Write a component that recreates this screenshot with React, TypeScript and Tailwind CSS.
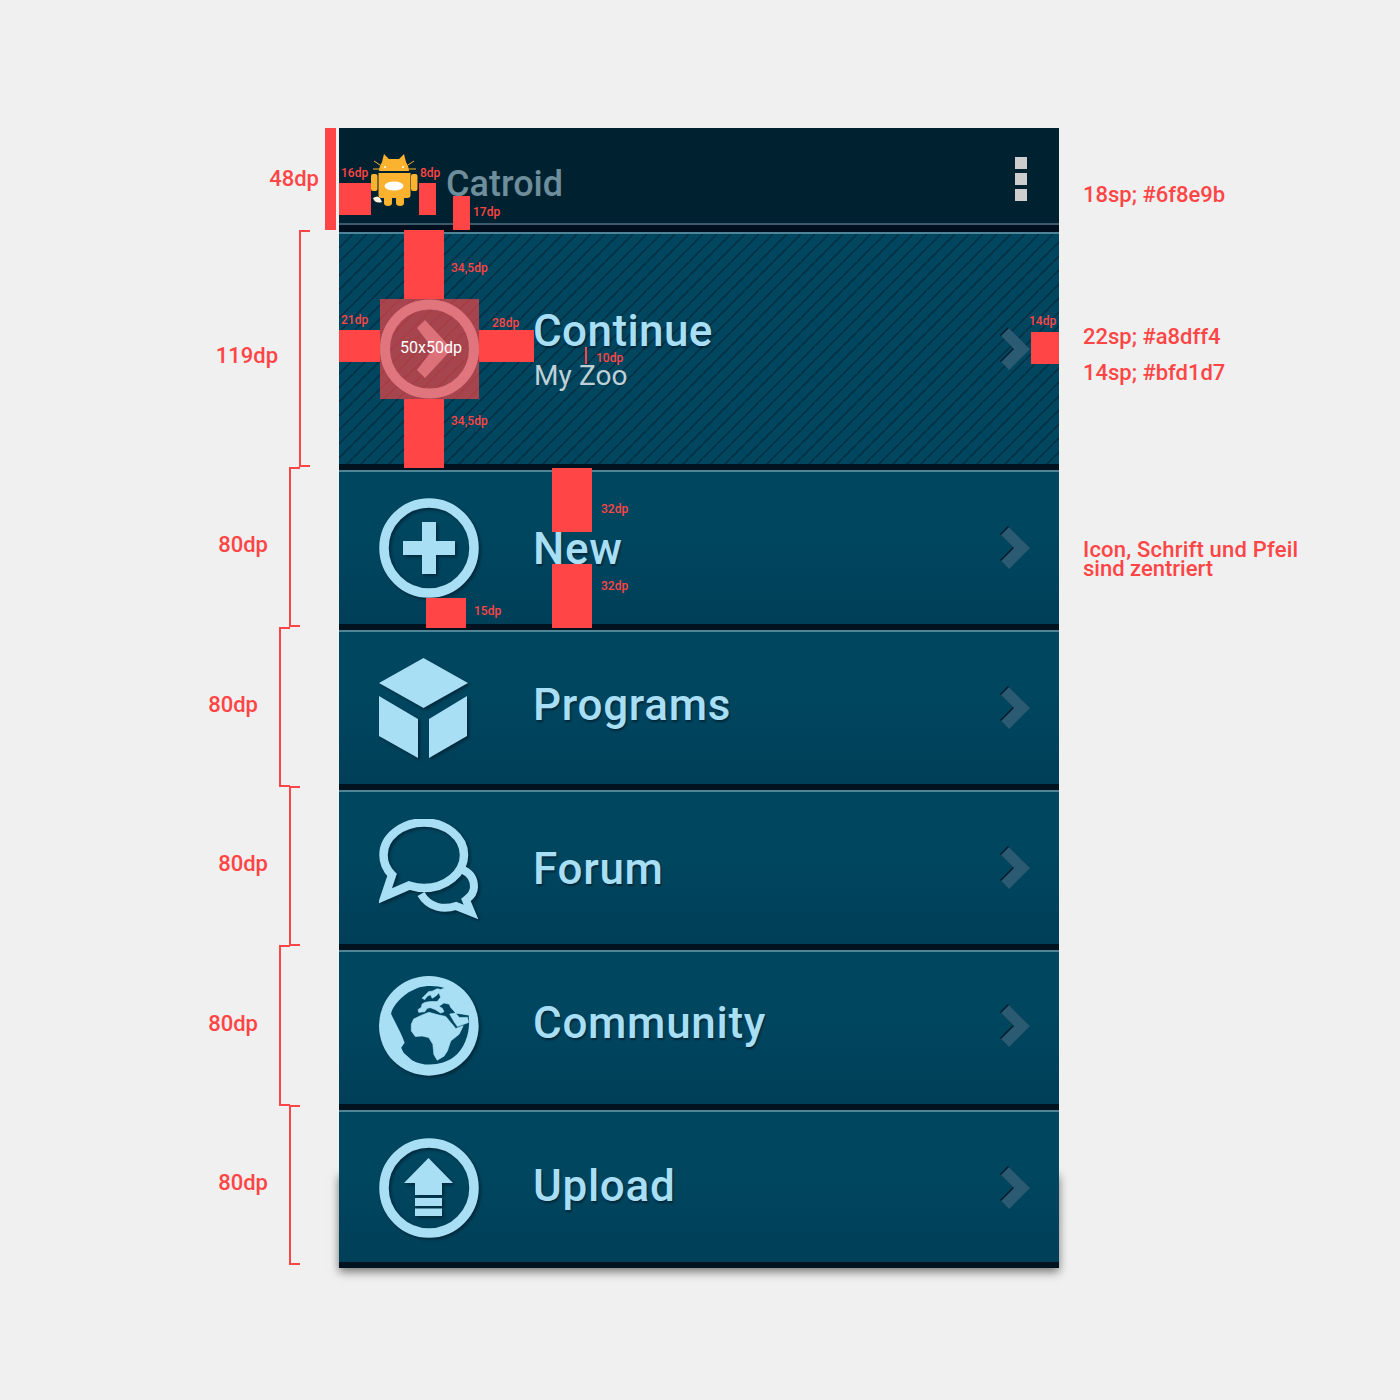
import React from "react";

const Chevron = ({ className = "" }: { className?: string }) => (
  <svg
    width="32"
    height="44"
    viewBox="0 0 32 44"
    className={`shrink-0 drop-shadow-[-1px_-1px_0.5px_rgba(0,15,30,0.8)] ${className}`}
  >
    <path d="M9 1 L30 22 L9 43 L1 35 L14 22 L1 9 Z" fill="#2b5a73" />
  </svg>
);

const iconShadow = "drop-shadow-[2px_2px_1.5px_rgba(0,20,35,0.55)]";

const PlusIcon = () => (
  <svg width="100" height="100" viewBox="0 0 100 100" className={iconShadow}>
    <circle cx="50" cy="50" r="45" fill="none" stroke="#a8dff4" strokeWidth="9.5" />
    <path d="M43 24 H57 V43 H76 V57 H57 V76 H43 V57 H24 V43 H43 Z" fill="#a8dff4" />
  </svg>
);

const BoxIcon = () => (
  <svg width="90" height="102" viewBox="0 0 90 102" className={iconShadow}>
    <path
      d="M44.5 1 L89 26 L44.5 51 L0 26 Z M0 39 L39 62 L39 101 L0 79 Z M50 62 L88 39 L88 79 L50 101 Z"
      fill="#a8dff4"
    />
  </svg>
);

const ForumIcon = () => (
  <svg width="100" height="100" viewBox="0 0 100 100" className={iconShadow}>
    <path
      d="M84 51 C91 54 95 60 95 68 C95 74 91 78 87 81 L92 93 L77 87 C65 91 50 89 42 75"
      fill="none"
      stroke="#a8dff4"
      strokeWidth="8"
    />
    <path
      d="M45 3.500 C67 3.500 85 18 85 36 C85 54 67 69 45 69 C39 69 35 68 30 66.500 L6 77 L13 56 C7 50 4.500 43 4.500 36 C4.500 18 23 3.500 45 3.500 Z"
      fill="none"
      stroke="#a8dff4"
      strokeWidth="8.500"
    />
  </svg>
);

const GlobeIcon = () => (
  <svg width="100" height="100" viewBox="12 12 297 297" className={iconShadow}>
    <circle cx="160" cy="160" r="148" fill="#a8dff4" />
    <path
      d="M128 47 C150 40 185 40 207 48 L222 100 L240 122 L278 128 C285 170 270 225 235 252 C205 275 150 285 110 262 L85 240 L78 225 L88 210 C80 185 62 155 48 125 C48 110 70 80 100 60 Z"
      fill="#004660"
    />
    <g fill="#a8dff4" stroke="#a8dff4" strokeWidth="2" strokeLinejoin="round">
      <path d="M207 48 L195 52 L185 50 L170 57 L160 58 L150 68 L140 78 L148 82 L155 72 L165 68 L170 78 L180 72 L190 62 L195 75 L185 88 L165 88 L150 90 L140 95 L138 105 L128 112 L130 120 L148 118 L155 108 L165 106 L180 112 L195 122 L205 118 L200 108 L190 102 L205 92 L222 96 L225 105 L240 122 L278 128 L270 75 Z" />
      <path d="M108 155 L115 140 L135 130 L160 120 L190 128 L210 132 L225 150 L240 168 L262 160 L250 185 L225 205 L215 235 L205 250 L185 262 L175 245 L172 215 L160 195 L140 190 L120 192 L108 175 Z" />
      <path d="M222 125 L240 122 L250 135 L275 135 L278 150 L262 156 L245 162 L235 148 Z" />
    </g>
  </svg>
);

const UploadIcon = () => (
  <svg width="100" height="100" viewBox="0 0 100 100" className={iconShadow}>
    <circle cx="50" cy="50" r="45" fill="none" stroke="#a8dff4" strokeWidth="9.500" />
    <path
      d="M49.500 20 L74 45 L63 45 L63 57 L36 57 L36 45 L25 45 Z M36 60 H63 V68 H36 Z M36 70.500 H63 V78 H36 Z"
      fill="#a8dff4"
    />
  </svg>
);

const CatLogo = () => (
  <svg width="50" height="54" viewBox="0 0 50 54" className="shrink-0">
    <path d="M10 11 L4 7 M38 11 L44 7 M3 15 L10 15 M38 15 L46 15" stroke="#fbb32f" strokeWidth="1" />
    <path d="M14 0 L19 5 H29 L34 0 L36 8 Q39 12 39 17 H9 Q9 12 12 8 Z" fill="#fbb32f" />
    <path
      d="M8.500 19 H40.500 V41 Q40.500 44 37.500 44 H34 V49 Q34 52 30 52 Q26 52 26 49 V44 H22 V49 Q22 52 18 52 Q14 52 14 49 V44 H11.500 Q8.500 44 8.500 41 Z"
      fill="#fbb32f"
    />
    <rect x="1" y="20" width="6.500" height="17" rx="2" fill="#fbb32f" />
    <rect x="41" y="20" width="6.500" height="17" rx="2" fill="#fbb32f" />
    <ellipse cx="24" cy="32" rx="9.500" ry="4.500" fill="#ffffff" />
    <circle cx="15" cy="13" r="1" fill="#ffffff" />
    <circle cx="33" cy="13" r="1" fill="#ffffff" />
    <path d="M3 44 Q8 41 10 44 L12 48 Q5 50 3 44 Z" fill="#fff6e4" />
  </svg>
);

const rowBg = "bg-gradient-to-b from-[#00465f] from-40% to-[#003f58]";
const rowText =
  "text-[44px] leading-none font-medium tracking-[0.7px] text-[#a8dff4] [text-shadow:1px_2px_2px_rgba(0,20,35,0.6)]";

const MenuRow = ({
  icon,
  label,
  iconClass = "items-center",
  textClass = "",
  arrowClass = "",
}: {
  icon: React.ReactNode;
  label: string;
  iconClass?: string;
  textClass?: string;
  arrowClass?: string;
}) => (
  <div className="h-[160px] flex flex-col">
    <div className="h-[2px] bg-[#4f8596]" />
    <div className={`h-[152px] flex items-center pl-[40px] pr-[27px] ${rowBg}`}>
      <div className={`w-[100px] h-[100px] flex shrink-0 ${iconClass}`}>{icon}</div>
      <div className={`ml-[54px] ${rowText} ${textClass}`}>{label}</div>
      <Chevron className={`ml-auto ${arrowClass}`} />
    </div>
    <div className="h-[6px] bg-[#00131f]" />
  </div>
);

const noteText = "font-medium text-[22px] leading-[24px] text-[#ff4545] whitespace-nowrap";

const Measure = ({
  rowClass,
  gutterClass,
  labelClass,
  bracketClass,
  label,
}: {
  rowClass: string;
  gutterClass: string;
  labelClass: string;
  bracketClass: string;
  label: string;
}) => (
  <div className={`flex justify-end gap-[21px] ${rowClass} ${gutterClass}`}>
    <span className={`${noteText} ${labelClass}`}>{label}</span>
    <div className={`w-[11px] shrink-0 border-l-2 border-t-2 border-b-2 border-[#ff4545] ${bracketClass}`} />
  </div>
);

const Block = ({ className }: { className: string }) => <div className={`absolute bg-[#ff4545] ${className}`} />;

const Small = ({ className, children }: { className: string; children: React.ReactNode }) => (
  <div className={`absolute font-medium text-[12px] leading-[14px] text-[#ff4545] whitespace-nowrap ${className}`}>
    {children}
  </div>
);

export default function App() {
  return (
    <div className="relative w-[1400px] h-[1400px] bg-[#f0f0f0] overflow-hidden font-['Roboto',sans-serif] pt-[128px] flex items-start">
      {/* shadow only starts near the bottom of the panel */}
      <div className="absolute left-[339px] top-[1172px] w-[720px] h-[96px] shadow-[0_4px_9px_rgba(0,0,0,0.5)]" />

      <aside className="w-[339px] shrink-0 flex flex-col">
        <div className="h-[102px] flex justify-end gap-[6px] pr-[3px]">
          <span className={`${noteText} mt-[39px]`}>48dp</span>
          <div className="w-[11px] bg-[#ff4545]" />
        </div>
        <Measure rowClass="h-[237px]" gutterClass="pr-[29px]" labelClass="mt-[114px]" bracketClass="h-[237px]" label="119dp" />
        <Measure rowClass="h-[160px]" gutterClass="pr-[39px]" labelClass="mt-[66px]" bracketClass="h-[160px]" label="80dp" />
        <Measure rowClass="h-[159px]" gutterClass="pr-[49px]" labelClass="mt-[66px]" bracketClass="h-[160px]" label="80dp" />
        <Measure rowClass="h-[159px]" gutterClass="pr-[39px]" labelClass="mt-[66px]" bracketClass="h-[160px]" label="80dp" />
        <Measure rowClass="h-[160px]" gutterClass="pr-[49px]" labelClass="mt-[67px]" bracketClass="h-[161px]" label="80dp" />
        <Measure rowClass="h-[160px]" gutterClass="pr-[39px]" labelClass="mt-[66px]" bracketClass="h-[160px]" label="80dp" />
      </aside>

      <main className="relative w-[720px] shrink-0 flex flex-col">
        <header className="h-[104px] flex flex-col bg-[#00212f]">
          <div className="h-[95px] flex items-center pl-[31px] pr-[32px]">
            <div className="mt-[10px]">
              <CatLogo />
            </div>
            <div className="ml-[26px] mt-[16px] text-[36px] leading-none font-medium text-[#6f8e9b]">Catroid</div>
            <div className="ml-auto flex flex-col gap-[4px] mt-[7px]">
              <div className="w-[12px] h-[12px] bg-[#cdcdcd]" />
              <div className="w-[12px] h-[12px] bg-[#cdcdcd]" />
              <div className="w-[12px] h-[12px] bg-[#cdcdcd]" />
            </div>
          </div>
          <div className="h-[2px] bg-[#3d5a6c]" />
          <div className="flex-1 bg-[#000f1d]" />
        </header>

        <div className="h-[238px] flex flex-col">
          <div className="h-[2px] bg-[#4f8596]" />
          <div className="h-[230px] flex items-center pl-[40px] pr-[27px] bg-[#00465f] bg-[linear-gradient(135deg,transparent_45.500%,#062a3e_48%,#062a3e_52%,transparent_54.500%)] bg-[length:14px_14px]">
            <div className="w-[100px] h-[100px] shrink-0" />
            <div className="ml-[55px] flex flex-col">
              <div className="text-[44px] leading-[50px] font-medium tracking-[0.4px] -ml-[1px] text-[#a8dff4] [text-shadow:1px_2px_2px_rgba(0,20,35,0.6)]">
                Continue
              </div>
              <div className="text-[28px] leading-[34px] mt-[3px] tracking-[0.1px] text-[#bfd1d7]">My Zoo</div>
            </div>
            <Chevron className="ml-auto" />
          </div>
          <div className="h-[6px] bg-[#00131f]" />
        </div>

        <MenuRow icon={<PlusIcon />} label="New" textClass="mt-[2px]" />
        <MenuRow icon={<BoxIcon />} label="Programs" iconClass="items-center justify-start" textClass="mb-[6px]" />
        <MenuRow icon={<ForumIcon />} label="Forum" iconClass="items-center mt-[1px]" textClass="mt-[2px]" />
        <MenuRow
          icon={<GlobeIcon />}
          label="Community"
          iconClass="items-center mb-[4px]"
          textClass="mb-[10px]"
          arrowClass="mb-[4px]"
        />
        <div className="h-[158px] flex flex-col">
          <div className="h-[2px] bg-[#4f8596]" />
          <div className={`h-[150px] pt-[2px] flex items-center pl-[40px] pr-[27px] ${rowBg}`}>
            <div className="w-[100px] h-[100px] flex items-center shrink-0">
              <UploadIcon />
            </div>
            <div className={`ml-[54px] mb-[4px] ${rowText}`}>Upload</div>
            <Chevron className="ml-auto" />
          </div>
          <div className="h-[6px] bg-[#00131f]" />
        </div>
      </main>

      <aside className="flex flex-col pl-[24px]">
        <div className={`${noteText} mt-[55px]`}>18sp; #6f8e9b</div>
        <div className={`${noteText} mt-[118px]`}>22sp; #a8dff4</div>
        <div className={`${noteText} mt-[12px]`}>14sp; #bfd1d7</div>
        <div className="mt-[155px] font-medium text-[22px] leading-[19px] text-[#ff4545] whitespace-nowrap">
          <span className="tracking-[0.2px]">Icon, Schrift und Pfeil</span>
          <br />
          sind zentriert
        </div>
      </aside>

      {/* red measurement overlay on top of the panel */}
      <Block className="left-[339px] top-[183px] w-[32px] h-[32px]" />
      <Block className="left-[419px] top-[183px] w-[17px] h-[32px]" />
      <Block className="left-[453px] top-[196px] w-[17px] h-[34px]" />
      <Block className="left-[404px] top-[230px] w-[40px] h-[69px]" />
      <Block className="left-[404px] top-[399px] w-[40px] h-[69px]" />
      <Block className="left-[339px] top-[330px] w-[41px] h-[32px]" />
      <Block className="left-[479px] top-[330px] w-[55px] h-[32px]" />
      <Block className="left-[1031px] top-[332px] w-[28px] h-[32px]" />
      <Block className="left-[585px] top-[347px] w-[2px] h-[17px]" />
      <Block className="left-[552px] top-[468px] w-[40px] h-[64px]" />
      <Block className="left-[552px] top-[564px] w-[40px] h-[64px]" />
      <Block className="left-[426px] top-[598px] w-[40px] h-[30px]" />

      <div className="absolute left-[380px] top-[299px] w-[99px] h-[100px] bg-[#ff4545]/65 flex items-center justify-center">
        <svg width="99" height="100" viewBox="0 0 99 100" className="absolute inset-0">
          <circle cx="49.500" cy="50" r="44.500" fill="none" stroke="#e0757e" strokeWidth="10" />
          <path d="M37 29 L45 21 L72 50 L45 79 L37 71 L53 50 Z" fill="#dc7179" />
        </svg>
        <span className="relative text-[16px] leading-none text-white ml-[3px] -mt-[2px]">50x50dp</span>
      </div>

      <Small className="left-[341px] top-[166px]">16dp</Small>
      <Small className="left-[420px] top-[166px]">8dp</Small>
      <Small className="left-[473px] top-[205px]">17dp</Small>
      <Small className="left-[451px] top-[261px]">34,5dp</Small>
      <Small className="left-[451px] top-[414px]">34,5dp</Small>
      <Small className="left-[341px] top-[313px]">21dp</Small>
      <Small className="left-[492px] top-[316px]">28dp</Small>
      <Small className="left-[1029px] top-[314px]">14dp</Small>
      <Small className="left-[596px] top-[351px]">10dp</Small>
      <Small className="left-[601px] top-[502px]">32dp</Small>
      <Small className="left-[601px] top-[579px]">32dp</Small>
      <Small className="left-[474px] top-[604px]">15dp</Small>
    </div>
  );
}
